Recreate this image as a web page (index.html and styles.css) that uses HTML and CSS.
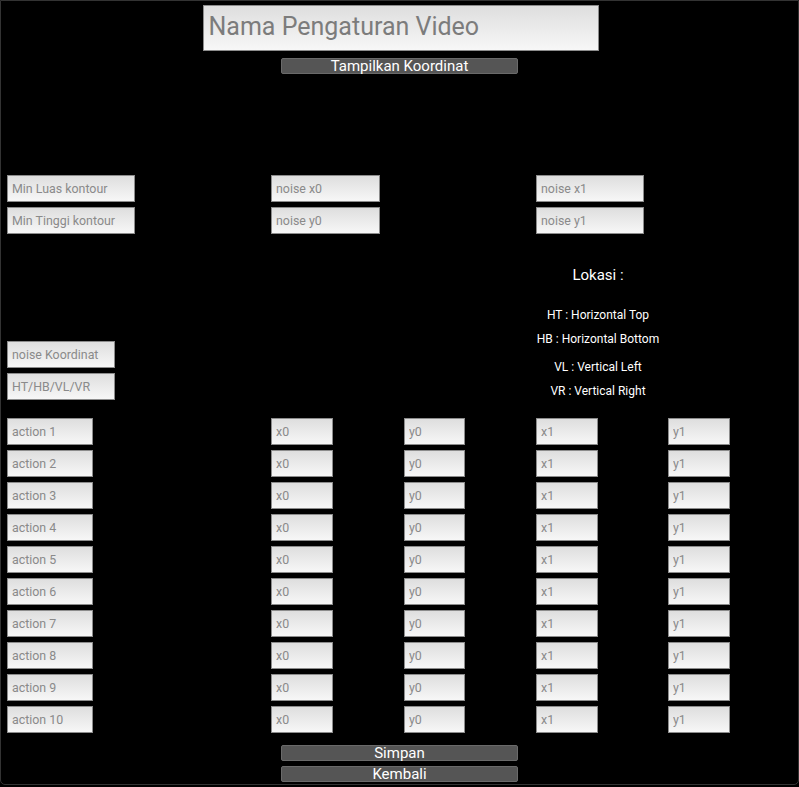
FILE: index.html
```html
<!DOCTYPE html>
<html lang="id">
<head>
<meta charset="utf-8">
<title>Pengaturan Video</title>
<link rel="stylesheet" href="styles.css">
</head>
<body>
<div class="frame">
  <div class="head">
    <input class="field title" placeholder="Nama Pengaturan Video">
    <button class="btn">Tampilkan Koordinat</button>
  </div>

  <div class="grid noise-grid">
    <input class="field w128" placeholder="Min Luas kontour">
    <input class="field w109 c2" placeholder="noise x0">
    <input class="field w108 c4" placeholder="noise x1">
    <input class="field w128" placeholder="Min Tinggi kontour">
    <input class="field w109 c2" placeholder="noise y0">
    <input class="field w108 c4" placeholder="noise y1">
  </div>

  <div class="loc">
    <div class="loc-left">
      <input class="field w108" placeholder="noise Koordinat">
      <input class="field w108" placeholder="HT/HB/VL/VR">
    </div>
    <div class="loc-right">
      <div class="loc-title">Lokasi :</div>
      <div class="loc-line l1">HT : Horizontal Top</div>
      <div class="loc-line l2">HB : Horizontal Bottom</div>
      <div class="loc-line l3">VL : Vertical Left</div>
      <div class="loc-line l4">VR : Vertical Right</div>
    </div>
  </div>

  <div class="grid actions" id="actions"></div>

  <div class="foot">
    <button class="btn">Simpan</button>
    <button class="btn">Kembali</button>
  </div>
</div>
<script>
  var g = document.getElementById('actions');
  var html = '';
  for (var i = 1; i <= 10; i++) {
    html += '<input class="field w86" placeholder="action ' + i + '">' +
            '<input class="field w62 c2" placeholder="x0">' +
            '<input class="field w61 c3" placeholder="y0">' +
            '<input class="field w62 c4" placeholder="x1">' +
            '<input class="field w62 c5" placeholder="y1">';
  }
  g.innerHTML = html;
</script>
</body>
</html>
```

FILE: styles.css
```css
html, body {
  margin: 0;
  padding: 0;
  background: #000;
}
body {
  font-family: Roboto, "Noto Sans", "Liberation Sans", sans-serif;
  width: 799px;
  height: 787px;
  overflow: hidden;
}
.frame {
  box-sizing: border-box;
  width: 799px;
  height: 785px;
  border: 1px solid #333;
  border-radius: 0 0 5px 5px;
  background: #000;
  display: flex;
  flex-direction: column;
}
.head {
  display: flex;
  flex-direction: column;
  align-items: center;
  padding-top: 4px;
}
.field {
  box-sizing: border-box;
  height: 27px;
  margin: 0;
  padding: 0 0 0 4px;
  border: 1px solid #8c8c8c;
  border-radius: 0;
  background: linear-gradient(#dedede, #f7f7f7);
  font-family: Roboto, "Noto Sans", "Liberation Sans", sans-serif;
  font-size: 12.4px;
  color: #333;
  outline: none;
}
.field::placeholder {
  color: #8a8a8a;
  opacity: 1;
}
.title {
  width: 396px;
  height: 46px;
  font-size: 25px;
  padding: 0 0 3px 5px;
  margin-left: 2px;
}
.title::placeholder {
  color: #7c7c7c;
}
.btn {
  box-sizing: border-box;
  width: 237px;
  height: 16px;
  margin: 0;
  padding: 0;
  border: 1px solid #6a6a6a;
  border-radius: 2px;
  background: #555;
  color: #fff;
  font-family: Roboto, "Noto Sans", "Liberation Sans", sans-serif;
  font-size: 15px;
  line-height: 14px;
  cursor: pointer;
}
.head .btn {
  margin-top: 7px;
}
.grid {
  display: grid;
  grid-template-columns: 264px 133px 132px 132px 132px;
  column-gap: 0;
  row-gap: 5px;
  padding-left: 6px;
  justify-items: start;
}
.noise-grid {
  margin-top: 101px;
}
.c2 { grid-column: 2; }
.c3 { grid-column: 3; }
.c4 { grid-column: 4; }
.c5 { grid-column: 5; }
.noise-grid .c2 { grid-column: 2 / span 2; }
.noise-grid .c4 { grid-column: 4 / span 2; }
.w128 { width: 128px; }
.w109 { width: 109px; }
.w108 { width: 108px; }
.w86 { width: 86px; }
.w62 { width: 62px; }
.w61 { width: 61px; }

.loc {
  display: flex;
  padding-left: 6px;
  height: 184px;
}
.loc-left {
  display: flex;
  flex-direction: column;
  gap: 5px;
  padding-top: 107px;
  width: 529px;
}
.loc-right {
  width: 124px;
  display: flex;
  flex-direction: column;
  align-items: center;
  color: #fff;
  white-space: nowrap;
}
.loc-title {
  font-size: 15px;
  line-height: 18px;
  margin-top: 32px;
}
.loc-line {
  font-size: 12px;
  line-height: 14px;
}
.l1 { margin-top: 24px; }
.l2 { margin-top: 10px; }
.l3 { margin-top: 14px; }
.l4 { margin-top: 10px; }

.foot {
  display: flex;
  flex-direction: column;
  align-items: center;
  gap: 5px;
  margin-top: 12px;
}
```
